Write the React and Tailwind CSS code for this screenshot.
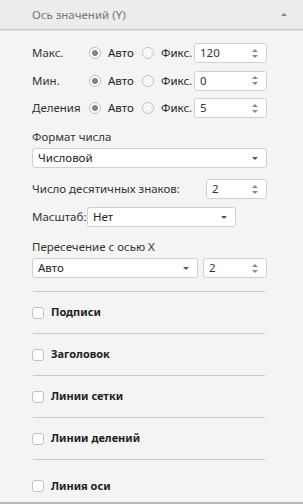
import React from "react";

function Radio({ checked }) {
  return (
    <span className="relative flex h-[12px] w-[12px] shrink-0 items-center justify-center rounded-full border border-[#bdbdbd] bg-white">
      {checked ? (
        <span className="h-[6px] w-[6px] rounded-full border border-[#777] bg-[#8a8a8a]" />
      ) : (
        <span className="h-[7px] w-[7px] rounded-full border border-[#e6e6e6]" />
      )}
    </span>
  );
}

function Spin({ value, className }) {
  return (
    <div className={"flex h-[20px] items-center justify-between rounded-[3px] border border-[#cfcfcf] bg-white pl-[5px] pr-[8px] " + className}>
      <span className="text-[11.5px] text-[#333]">{value}</span>
      <span className="flex flex-col items-center gap-[3px]">
        <span className="h-0 w-0 border-x-[3px] border-b-[3px] border-x-transparent border-b-[#8a8a8a]" />
        <span className="h-0 w-0 border-x-[3px] border-t-[3px] border-x-transparent border-t-[#8a8a8a]" />
      </span>
    </div>
  );
}

function Select({ value, className }) {
  return (
    <div className={"flex h-[20px] items-center justify-between rounded-[3px] border border-[#cfcfcf] bg-white pl-[5px] pr-[8px] " + className}>
      <span className="text-[11.5px] text-[#222]">{value}</span>
      <span className="h-0 w-0 border-x-[3px] border-t-[3px] border-x-transparent border-t-[#555]" />
    </div>
  );
}

function RadioRow({ label, value }) {
  return (
    <div className="flex h-[20px] items-center whitespace-nowrap">
      <span className="w-[57px] text-[11.5px] text-[#333]">{label}</span>
      <Radio checked />
      <span className="ml-[7px] w-[27px] text-[11.5px] text-[#222]">Авто</span>
      <span className="ml-[7px]">
        <Radio />
      </span>
      <span className="ml-[7px] w-[33px] text-[11.5px] text-[#222]">Фикс.</span>
      <Spin value={value} className="w-[73px]" />
    </div>
  );
}

function Check({ label, last }) {
  return (
    <div className={"flex items-center border-t border-[#c9c9c9] " + (last ? "h-[43px] pt-[10px]" : "h-[42px]")}>
      <span className="ml-[-1px] h-[12px] w-[12px] rounded-[3px] border border-[#c2c2c2] bg-white" />
      <span className="ml-[7px] text-[11px] font-bold text-[#222]">{label}</span>
    </div>
  );
}

export default function App() {
  return (
    <div
      className="flex h-[504px] w-[303px] flex-col overflow-hidden border-b-2 border-[#b8b8b8] bg-[#f4f4f4]"
      style={{ fontFamily: '"Noto Sans", "Open Sans", sans-serif' }}
    >
      <div className="flex h-[30px] shrink-0 items-center justify-between border-b border-[#c6c6c6] bg-[#ebeced] pl-[32px] pr-[16px] shadow-[0_1px_0_#e0e0e0]">
        <span className="text-[11.5px] text-[#777]">Ось значений (Y)</span>
        <span className="h-0 w-0 border-x-[3px] border-b-[3px] border-x-transparent border-b-[#888]" />
      </div>
      <div className="flex flex-col pl-[32px] pr-[36px] pt-[13px]">
        <div className="flex flex-col gap-[7.5px]">
          <RadioRow label="Макс." value="120" />
          <RadioRow label="Мин." value="0" />
          <RadioRow label="Деления" value="5" />
        </div>
        <div className="mt-[11px] h-[16px] text-[11.5px] leading-[16px] text-[#333]">Формат числа</div>
        <Select value="Числовой" className="mt-[3px] w-full" />
        <div className="mt-[11px] flex h-[20px] items-center justify-between">
          <span className="text-[11.5px] text-[#333]">Число десятичных знаков:</span>
          <Spin value="2" className="w-[61px]" />
        </div>
        <div className="mt-[8px] flex h-[20px] items-center whitespace-nowrap">
          <span className="w-[55px] text-[11.5px] text-[#333]">Масштаб:</span>
          <Select value="Нет" className="w-[149px]" />
        </div>
        <div className="mt-[12px] h-[16px] text-[11.5px] leading-[16px] text-[#333]">Пересечение с осью X</div>
        <div className="mt-[3px] flex gap-[5px]">
          <Select value="Авто" className="w-[166px]" />
          <Spin value="2" className="flex-1" />
        </div>
        <div className="mt-[13px] ml-px mr-[2px]">
          <Check label="Подписи" />
          <Check label="Заголовок" />
          <Check label="Линии сетки" />
          <Check label="Линии делений" />
          <Check label="Линия оси" last />
        </div>
      </div>
    </div>
  );
}
